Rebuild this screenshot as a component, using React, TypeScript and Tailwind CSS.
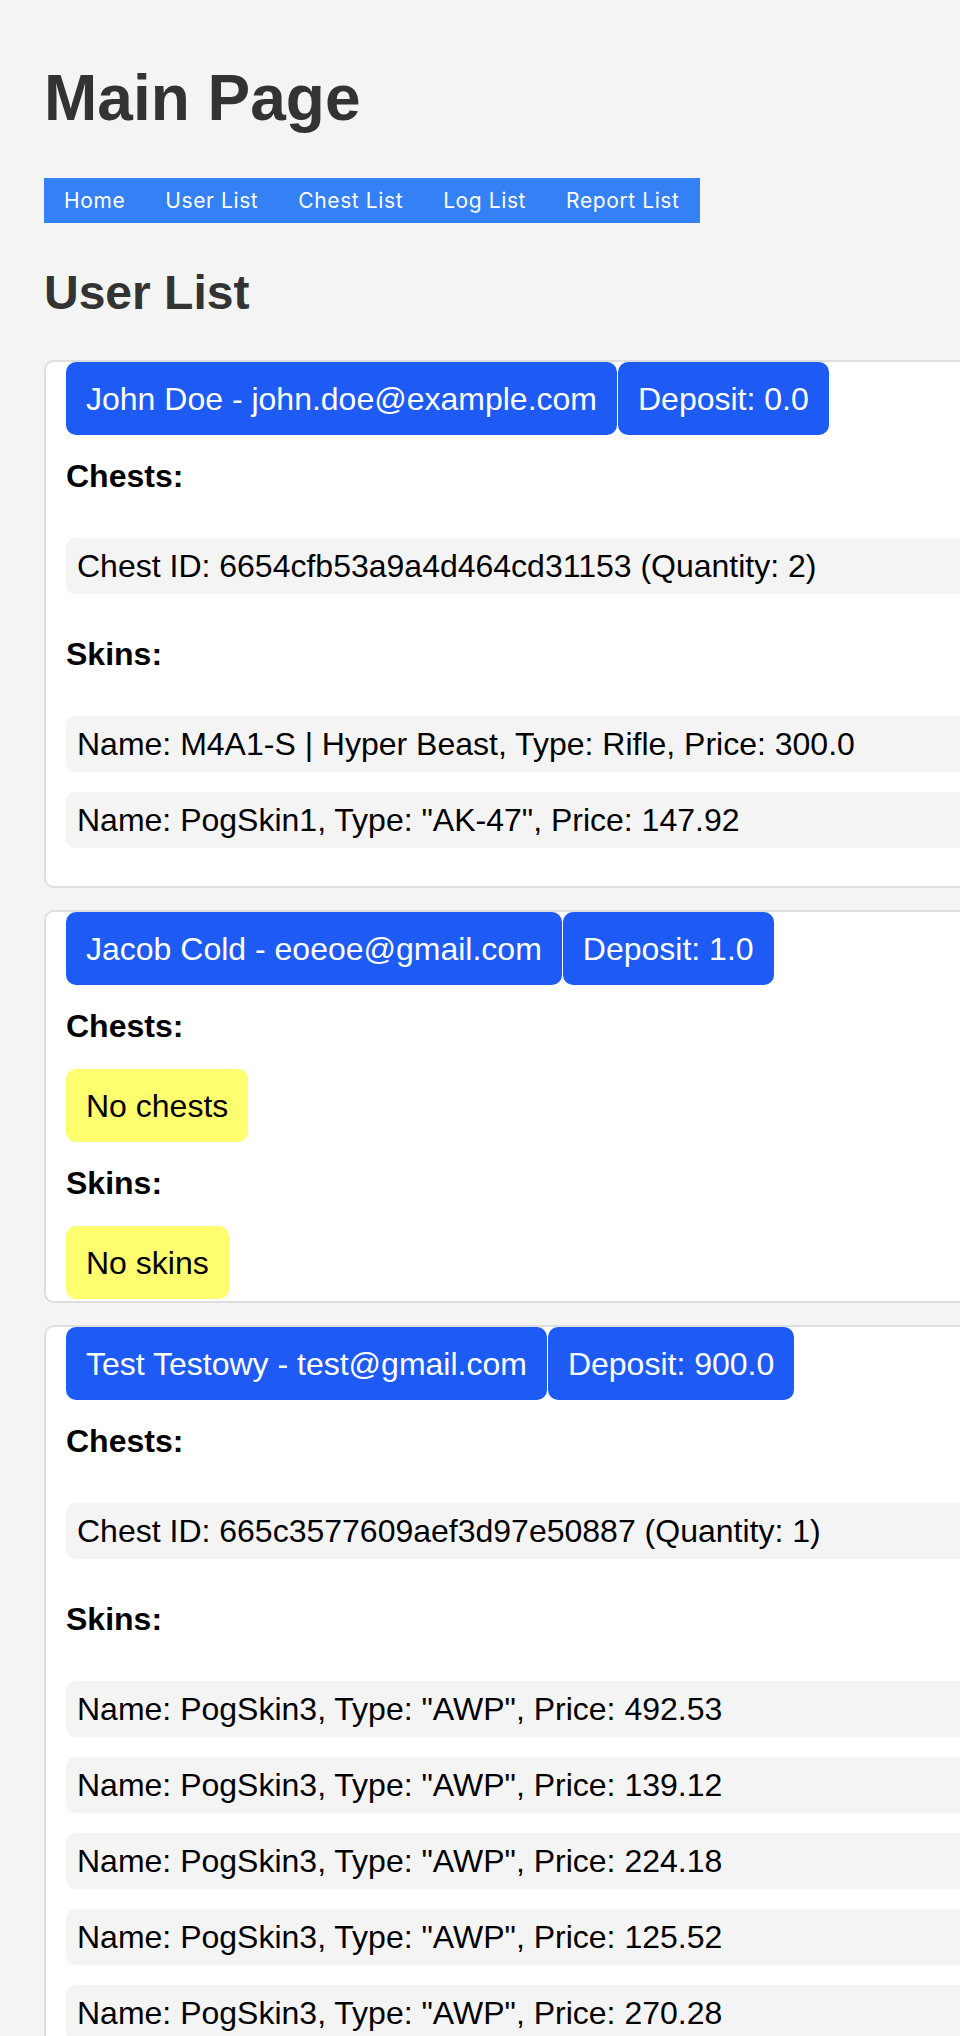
import React from "react";

type User = {
  name: string;
  email: string;
  deposit: string;
  chests: string[];
  skins: string[];
};

const users: User[] = [
  {
    name: "John Doe",
    email: "john.doe@example.com",
    deposit: "0.0",
    chests: ["Chest ID: 6654cfb53a9a4d464cd31153 (Quantity: 2)"],
    skins: [
      "Name: M4A1-S | Hyper Beast, Type: Rifle, Price: 300.0",
      'Name: PogSkin1, Type: "AK-47", Price: 147.92',
    ],
  },
  {
    name: "Jacob Cold",
    email: "eoeoe@gmail.com",
    deposit: "1.0",
    chests: [],
    skins: [],
  },
  {
    name: "Test Testowy",
    email: "test@gmail.com",
    deposit: "900.0",
    chests: ["Chest ID: 665c3577609aef3d97e50887 (Quantity: 1)"],
    skins: [
      'Name: PogSkin3, Type: "AWP", Price: 492.53',
      'Name: PogSkin3, Type: "AWP", Price: 139.12',
      'Name: PogSkin3, Type: "AWP", Price: 224.18',
      'Name: PogSkin3, Type: "AWP", Price: 125.52',
      'Name: PogSkin3, Type: "AWP", Price: 270.28',
    ],
  },
];

const navItems = ["Home", "User List", "Chest List", "Log List", "Report List"];

function Section({ label, items, empty }: { label: string; items: string[]; empty: string }) {
  return (
    <>
      <h4 className="mt-[23px] text-[32px] leading-[37px] font-bold text-black">{label}</h4>
      {items.length === 0 ? (
        <div className="mt-[24px] self-start h-[73px] px-[20px] flex items-center rounded-[10px] bg-[#fffe6f] text-[32px] text-black">
          {empty}
        </div>
      ) : (
        <ul className="mt-[43px] mb-[19px] last:mb-[36px] flex flex-col gap-[20px]">
          {items.map((t, i) => (
            <li
              key={i}
              className="h-[56px] pl-[11px] flex items-center rounded-[9px] bg-[#f4f4f4] text-[32px] text-black whitespace-nowrap"
            >
              {t}
            </li>
          ))}
        </ul>
      )}
    </>
  );
}

function UserCard({ user }: { user: User }) {
  return (
    <div className="w-[1000px] flex flex-col border-2 border-[#dedede] rounded-[10px] bg-white pl-[20px] pr-[20px] pb-[2px]">
      <div className="flex gap-px">
        <div className="h-[73px] px-[20px] flex items-center rounded-[10px] bg-[#1e5bf5] text-white text-[32px] whitespace-nowrap">
          {user.name} - {user.email}
        </div>
        <div className="h-[73px] px-[20px] flex items-center rounded-[10px] bg-[#1e5bf5] text-white text-[32px] whitespace-nowrap">
          Deposit: {user.deposit}
        </div>
      </div>
      <Section label="Chests:" items={user.chests} empty="No chests" />
      <Section label="Skins:" items={user.skins} empty="No skins" />
    </div>
  );
}

export default function App() {
  return (
    <div
      className="w-[960px] h-[2036px] overflow-hidden bg-[#f4f4f4]"
      style={{ fontFamily: '"Liberation Sans", Arial, Helvetica, sans-serif' }}
    >
      <div className="pl-[44px] pt-[61px]">
        <h1 className="text-[64px] leading-[74px] font-bold text-[#333333]">Main Page</h1>
        <nav className="mt-[43px] inline-flex h-[45px] items-center bg-[#3480f5]">
          {navItems.map((n) => (
            <a
              key={n}
              className="px-[20px] text-[21px] tracking-[0.6px] text-white whitespace-nowrap"
              style={{ fontFamily: 'Inter, "Open Sans", sans-serif' }}
            >
              {n}
            </a>
          ))}
        </nav>
        <h2 className="mt-[42px] text-[48px] leading-[55px] font-bold text-[#333333]">User List</h2>
        <div className="mt-[40px] flex flex-col gap-[22px]">
          {users.map((u) => (
            <UserCard key={u.email} user={u} />
          ))}
        </div>
      </div>
    </div>
  );
}
